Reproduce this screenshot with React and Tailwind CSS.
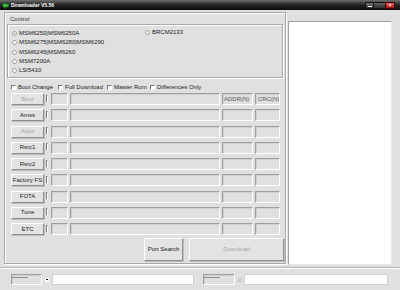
import React from 'react';

// Downloader V5.56 - ventana principal reducida
const radiosA = ['MSM6250|MSM6250A', 'MSM6275|MSM6280|MSM6290', 'MSM6245|MSM6260', 'MSM7200A', 'LSI5410'];
const filas = [
  { label: 'Boot', off: true },
  { label: 'Amss' },
  { label: 'Apps', off: true },
  { label: 'Rsrc1' },
  { label: 'Rsrc2' },
  { label: 'Factory FS' },
  { label: 'FOTA' },
  { label: 'Tune' },
  { label: 'ETC' },
];
const opciones = [
  { label: 'Boot Change', w: 'w-[47px]' },
  { label: 'Full Download', w: 'w-[49px]' },
  { label: 'Master Rom', w: 'w-[43px]' },
  { label: 'Differences Only', w: 'w-[60px]' },
];

const Radio = ({ on }) => (
  <span className="w-[5px] h-[5px] rounded-full bg-white border border-[#9a9a9a] flex items-center justify-center shrink-0">
    {on && <span className="w-[1.5px] h-[1.5px] rounded-full bg-[#222]" />}
  </span>
);

const Check = ({ white = true }) => (
  <span className={`w-[5px] h-[5px] shrink-0 border-t border-l border-[#777] border-r border-b border-r-white border-b-white ${white ? 'bg-white' : 'bg-[#e0e0e0]'}`} />
);

const Sunken = ({ className = '', children }) => (
  <div className={`h-full border border-t-[#9e9e9e] border-l-[#9e9e9e] border-r-white border-b-white shadow-[inset_1px_1px_0_#d0d0d0] bg-[#e0e0e0] flex items-center ${className}`}>
    {children}
  </div>
);

const Boton = ({ children, off, className = '' }) => (
  <div className={`h-full border border-t-white border-l-white border-r-[#8f8f8f] border-b-[#8f8f8f] shadow-[1px_1px_0_#bdbdbd] bg-[#e3e3e3] flex items-center justify-center ${off ? 'text-[#a6a6a6]' : 'text-[#1a1a1a]'} ${className}`}>
    {children}
  </div>
);

export default function App() {
  return (
    <div className="w-[400px] h-[290px] overflow-hidden bg-[#e0e0e0] font-['Liberation_Sans',Arial,sans-serif] text-[6px] leading-[7px] text-[#1a1a1a]">
      {/* barra de título */}
      <div className="h-[10px] flex items-center bg-gradient-to-b from-[#6e6e6e] via-[#222] to-[#0c0c0c] pl-[2px] pr-[5px]">
        <svg width="7" height="7" viewBox="0 0 7 7">
          <path d="M0 3.5 L3.5 0.3 L3.5 2 L6.7 2 L6.7 5 L3.5 5 L3.5 6.7 Z" fill="#35c135" stroke="#0d5a0d" strokeWidth="0.5" />
        </svg>
        <span className="ml-[2px] text-white font-bold text-[5px] leading-[6px]">Downloader V5.56</span>
        <div className="ml-auto flex h-[7px] mt-[1px]">
          <div className="w-[9px] h-full bg-gradient-to-b from-[#777] to-[#333] border border-[#111] flex items-end justify-center pb-[1px]">
            <span className="w-[4px] h-[1px] bg-white" />
          </div>
          <div className="w-[11px] h-full bg-gradient-to-b from-[#666] to-[#2e2e2e] border-y border-[#111]" />
          <div className="w-[10px] h-full bg-gradient-to-b from-[#e55] to-[#a01010] border border-[#400] flex items-center justify-center text-white font-bold text-[5px] leading-[5px]">
            ×
          </div>
        </div>
      </div>

      {/* cuerpo */}
      <div className="flex items-start h-[256px]">
        <div className="ml-[4px] mt-[2px] w-[282px] h-[252px] border border-[#a9a9a9] shadow-[inset_1px_1px_0_#fff,1px_1px_0_#fff] flex flex-col">
          <div className="ml-[5px] mt-[3px] h-[7px] text-[#333]">Control</div>
          <div className="ml-[2px] mt-[1px] w-[276px] h-[54px] border border-[#a9a9a9] shadow-[inset_1px_1px_0_#fff,1px_1px_0_#fff] flex pl-[4px] pt-[5px]">
            <div className="w-[133px] flex flex-col gap-[2.3px]">
              {radiosA.map((r, i) => (
                <div key={r} className="flex items-center gap-[2px] h-[7px]">
                  <Radio on={i === 0} />
                  <span>{r}</span>
                </div>
              ))}
            </div>
            <div className="flex items-center gap-[2px] h-[7px] -mt-[1px]">
              <Radio />
              <span>BRCM2133</span>
            </div>
          </div>

          <div className="mt-[6px] ml-[6px] h-[6px] flex items-center">
            {opciones.map((o) => (
              <div key={o.label} className={`flex items-center gap-[2px] ${o.w}`}>
                <Check />
                <span>{o.label}</span>
              </div>
            ))}
          </div>

          <div className="mt-[3px] ml-[6px] flex flex-col gap-[4.25px]">
            {filas.map((f, i) => (
              <div key={f.label} className="h-[12px] flex items-center">
                <Boton off={f.off} className="w-[33px]">{f.label}</Boton>
                <span className="ml-[2px]"><Check white={false} /></span>
                <Sunken className="ml-[3px] w-[17px]" />
                <Sunken className="ml-[2px] w-[150px]" />
                <Sunken className="ml-[2px] w-[31px] pl-[1px] text-[#555]">{i === 0 ? 'ADDR(N)' : ''}</Sunken>
                <Sunken className="ml-[2px] w-[25px] pl-[2px] text-[#555]">{i === 0 ? 'CRC(N)' : ''}</Sunken>
              </div>
            ))}
          </div>

          <div className="mt-[3px] h-[23px] flex ml-[139px]">
            <Boton className="w-[39px]">Port Search</Boton>
            <Boton off className="ml-[6px] w-[95px]">Download</Boton>
          </div>
        </div>

        <div className="ml-[2px] mt-[11px] w-[104px] h-[244px] bg-white border border-t-[#a0a0a0] border-l-[#a0a0a0] border-r-[#e8e8e8] border-b-[#e8e8e8]" />
      </div>

      {/* separador */}
      <div className="mt-[1px] h-[2px] border-t border-[#b5b5b5] border-b border-b-white" />

      {/* barra de estado */}
      <div className="mt-[5px] h-[11px] flex items-center">
        <Sunken className="ml-[11px] w-[31px] items-start pt-[2px]">
          <span className="w-[16px] h-[1px] bg-[#8a8a8a]" />
        </Sunken>
        <span className="ml-[3px] w-[4px] h-[4px] bg-white flex items-center justify-center">
          <span className="w-[1.5px] h-[1.5px] bg-[#111]" />
        </span>
        <div className="ml-[3px] w-[142px] h-full bg-white border border-[#d0d0d0]" />
        <Sunken className="ml-[9px] w-[32px] items-start pt-[2px]">
          <span className="w-[16px] h-[1px] bg-[#8a8a8a]" />
        </Sunken>
        <span className="ml-[3px] w-[4px] h-[4px] rounded-full bg-white border border-[#aaa]" />
        <div className="ml-[2px] w-[144px] h-full bg-white border border-[#d0d0d0]" />
      </div>
    </div>
  );
}
